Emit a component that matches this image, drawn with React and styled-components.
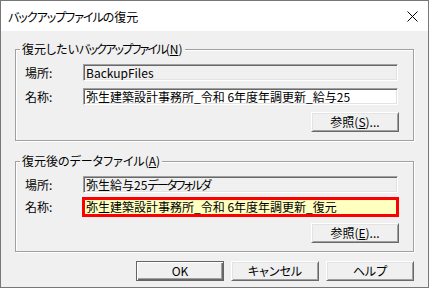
import React from "react";
import styled, { createGlobalStyle } from "styled-components";

const Global = createGlobalStyle`
  html, body { margin: 0; padding: 0; background: #ffffff; }
  * { box-sizing: border-box; }
  body {
    font-family: "Noto Sans CJK JP", "Liberation Sans", sans-serif;
    font-size: 12px;
    color: #000;
  }
`;

const Window = styled.div`
  width: 429px;
  height: 288px;
  border: 1px solid #777777;
  display: flex;
  flex-direction: column;
  background: #f0f0f0;
`;

const TitleBar = styled.div`
  height: 30px;
  flex: none;
  background: #ffffff;
  display: flex;
  align-items: center;
  justify-content: space-between;
  padding: 0 10px 0 7px;
`;

const TitleText = styled.span`
  font-size: 12px;
  line-height: 14px;
  font-feature-settings: "palt";
  padding-top: 1px;
`;

const Kana = styled.span`
  letter-spacing: ${(p) => p.$ls ?? -1.8}px;
`;

const CloseIcon = styled.svg`
  width: 11px;
  height: 11px;
  display: block;
  margin-top: 1px;
`;

const Client = styled.div`
  flex: 1;
  display: flex;
  flex-direction: column;
  padding: 18px 14px 0 14px;
  font-feature-settings: "palt";
`;

const Group = styled.div`
  position: relative;
  height: ${(p) => p.$h}px;
  margin-bottom: ${(p) => p.$mb || 0}px;
  border: 1px solid #a0a0a0;
  box-shadow: 1px 1px 0 #ffffff, inset 1px 1px 0 #ffffff;
  padding: 14px 14px 8px 9px;
  display: flex;
  flex-direction: column;
`;

const Legend = styled.span`
  position: absolute;
  top: -8px;
  left: 4px;
  padding: 0 2px;
  line-height: 14px;
  background: #f0f0f0;
  white-space: nowrap;
`;

const U = styled.span`
  text-decoration: underline;
  text-underline-offset: 1px;
`;

const Row = styled.div`
  display: grid;
  grid-template-columns: 58px 1fr;
  align-items: center;
  margin-bottom: ${(p) => p.$mb || 0}px;
`;

const Label = styled.span`
  line-height: 14px;
`;

const Field = styled.div`
  height: 17px;
  margin-right: 1px;
  border: 1px solid;
  border-color: #a0a0a0 #ffffff #ffffff #a0a0a0;
  box-shadow: inset 1px 1px 0 #696969, inset -1px -1px 0 #e3e3e3;
  background: ${(p) => (p.$readOnly ? "#f0f0f0" : "#ffffff")};
  display: flex;
  align-items: center;
  padding-left: 2px;
  white-space: nowrap;
  overflow: hidden;
  line-height: 14px;
`;

const HighlightField = styled.div`
  height: 20px;
  margin-left: -1px;
  border: 3px solid #ff0000;
  background: #ffffc0;
  display: flex;
  align-items: center;
  padding-left: 1px;
  white-space: nowrap;
  overflow: hidden;
  line-height: 14px;
`;

const ButtonRow = styled.div`
  display: flex;
  justify-content: flex-end;
  gap: 7px;
  margin-top: ${(p) => p.$mt || 0}px;
`;

const Button = styled.button`
  width: 88px;
  height: 20px;
  padding: 0;
  margin: 0;
  font: inherit;
  font-feature-settings: "palt";
  color: #000;
  background: #f0f0f0;
  border: 1px solid;
  border-color: ${(p) =>
    p.$default ? "#646464" : "#ffffff #696969 #696969 #ffffff"};
  box-shadow: ${(p) =>
    p.$default
      ? "inset 1px 1px 0 #ffffff, inset -1px -1px 0 #696969, inset -2px -2px 0 #a0a0a0"
      : "inset 1px 1px 0 #e3e3e3, inset -1px -1px 0 #a0a0a0"};
  display: flex;
  align-items: center;
  justify-content: center;
  line-height: 14px;
`;

export default function App() {
  return (
    <>
      <Global />
      <Window>
        <TitleBar>
          <TitleText>
            <Kana $ls={-1}>バックアップファイル</Kana>の復元
          </TitleText>
          <CloseIcon viewBox="0 0 11 11">
            <path d="M0.5 0.5 L10.5 10.5 M10.5 0.5 L0.5 10.5" stroke="#000" strokeWidth="1" fill="none" />
          </CloseIcon>
        </TitleBar>
        <Client>
          <Group $h={92} $mb={20}>
            <Legend>
              復元したい<Kana>バックアップファイル</Kana>(<U>N</U>)
            </Legend>
            <Row $mb={7}>
              <Label>場所:</Label>
              <Field $readOnly>BackupFiles</Field>
            </Row>
            <Row $mb={7}>
              <Label>名称:</Label>
              <Field>弥生建築設計事務所_令和 6年度年調更新_給与25</Field>
            </Row>
            <ButtonRow>
              <Button>
                参照(<U>S</U>)...
              </Button>
            </ButtonRow>
          </Group>
          <Group $h={91}>
            <Legend>
              復元後のデータファイル(<U>A</U>)
            </Legend>
            <Row $mb={4}>
              <Label>場所:</Label>
              <Field $readOnly>
                弥生給与25<Kana>データフォルダ</Kana>
              </Field>
            </Row>
            <Row $mb={6}>
              <Label>名称:</Label>
              <HighlightField>弥生建築設計事務所_令和 6年度年調更新_復元</HighlightField>
            </Row>
            <ButtonRow>
              <Button>
                参照(<U>E</U>)...
              </Button>
            </ButtonRow>
          </Group>
          <ButtonRow $mt={9}>
            <Button $default>OK</Button>
            <Button>キャンセル</Button>
            <Button>ヘルプ</Button>
          </ButtonRow>
        </Client>
      </Window>
    </>
  );
}
